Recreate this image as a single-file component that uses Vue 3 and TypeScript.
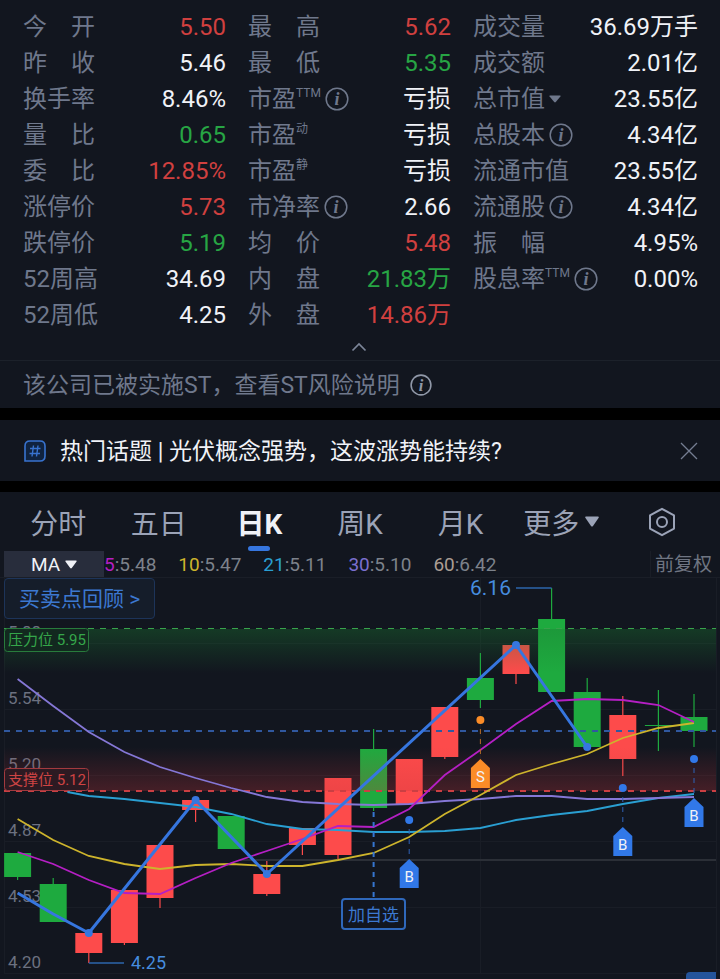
<script setup lang="ts">
type Tone = 'plain' | 'up' | 'down'

interface Stat {
  label: string
  value: string
  tone?: Tone
  sup?: string
  info?: boolean
  menu?: boolean
}

interface Candle {
  up: boolean
  high: number
  top: number
  bottom: number
  low: number
}

interface Marker {
  slot: number
  dot: number
  tip: number
  kind: 'B' | 'S'
}

const columns: Stat[][] = [
  [
    { label: '今　开', value: '5.50', tone: 'up' },
    { label: '昨　收', value: '5.46' },
    { label: '换手率', value: '8.46%' },
    { label: '量　比', value: '0.65', tone: 'down' },
    { label: '委　比', value: '12.85%', tone: 'up' },
    { label: '涨停价', value: '5.73', tone: 'up' },
    { label: '跌停价', value: '5.19', tone: 'down' },
    { label: '52周高', value: '34.69' },
    { label: '52周低', value: '4.25' },
  ],
  [
    { label: '最　高', value: '5.62', tone: 'up' },
    { label: '最　低', value: '5.35', tone: 'down' },
    { label: '市盈', sup: 'TTM', info: true, value: '亏损' },
    { label: '市盈', sup: '动', value: '亏损' },
    { label: '市盈', sup: '静', value: '亏损' },
    { label: '市净率', info: true, value: '2.66' },
    { label: '均　价', value: '5.48', tone: 'up' },
    { label: '内　盘', value: '21.83万', tone: 'down' },
    { label: '外　盘', value: '14.86万', tone: 'up' },
  ],
  [
    { label: '成交量', value: '36.69万手' },
    { label: '成交额', value: '2.01亿' },
    { label: '总市值', menu: true, value: '23.55亿' },
    { label: '总股本', info: true, value: '4.34亿' },
    { label: '流通市值', value: '23.55亿' },
    { label: '流通股', info: true, value: '4.34亿' },
    { label: '振　幅', value: '4.95%' },
    { label: '股息率', sup: 'TTM', info: true, value: '0.00%' },
  ],
]

const tabs = ['分时', '五日', '日K', '周K', '月K']
const activeTab = '日K'

const averages = [
  { period: '5', value: '5.48', color: '#b51fc4' },
  { period: '10', value: '5.47', color: '#cdb42c' },
  { period: '21', value: '5.11', color: '#2a9fd2' },
  { period: '30', value: '5.10', color: '#7b6fcf' },
  { period: '60', value: '6.42', color: '#ab9d93' },
]

/* Plot geometry: one slot per trading day, vertical values in plot units. */
const slotX = (slot: number): number => 17.6 + slot * 35.6
const bodyWidth = 27

const candles: Candle[] = [
  { up: false, high: 275, top: 275, bottom: 299, low: 302 },
  { up: false, high: 300, top: 306, bottom: 344, low: 344 },
  { up: true, high: 355, top: 355, bottom: 375, low: 385 },
  { up: true, high: 312, top: 312, bottom: 365, low: 367 },
  { up: true, high: 267, top: 267, bottom: 320, low: 330 },
  { up: true, high: 220, top: 222, bottom: 232, low: 244 },
  { up: false, high: 238, top: 238, bottom: 271, low: 271 },
  { up: true, high: 283, top: 296, bottom: 316, low: 318 },
  { up: true, high: 250, top: 250, bottom: 267, low: 277 },
  { up: true, high: 200, top: 200, bottom: 277, low: 281 },
  { up: false, high: 151, top: 171, bottom: 230, low: 233 },
  { up: true, high: 181, top: 181, bottom: 226, low: 226 },
  { up: true, high: 129, top: 129, bottom: 179, low: 181 },
  { up: false, high: 75, top: 100, bottom: 122, low: 130 },
  { up: true, high: 67, top: 67, bottom: 96, low: 106 },
  { up: false, high: 10, top: 41, bottom: 114, low: 114 },
  { up: false, high: 100, top: 114, bottom: 169, low: 169 },
  { up: true, high: 118, top: 137, bottom: 181, low: 198 },
  { up: false, high: 112, top: 147, bottom: 148, low: 173 },
  { up: false, high: 116, top: 139, bottom: 153, low: 169 },
]

const series = [
  {
    color: '#2a9fd2',
    start: 1.4,
    values: [214, 218, 221, 225, 229, 236, 246, 251, 252, 254, 254, 253, 250, 242, 237, 233, 226, 220, 216],
  },
  {
    color: '#8577d6',
    start: 0,
    values: [101, 128, 154, 174, 189, 200, 210, 219, 224, 226, 227, 226, 223, 221, 218, 218, 221, 221, 220, 219],
  },
  {
    color: '#cdb42c',
    start: 0,
    values: [241, 262, 278, 286, 291, 287, 286, 288, 288, 282, 275, 259, 236, 217, 197, 186, 176, 160, 150, 145],
  },
  {
    color: '#b51fc4',
    start: 0,
    values: [274, 286, 302, 315, 316, 300, 285, 273, 261, 248, 249, 231, 197, 172, 146, 123, 121, 122, 127, 144],
  },
].map((s) => ({
  color: s.color,
  points: s.values.map((v, i) => `${slotX(i === 0 ? s.start : Math.floor(s.start) + i)},${v}`).join(' '),
}))

const trades: [number, number][] = [
  [0, 315],
  [1, 336],
  [2, 355],
  [5, 222],
  [7, 296],
  [14, 67],
  [16, 169],
]
const tradeLine = trades.map(([slot, y]) => `${slotX(slot)},${y}`).join(' ')
const tradeDots = trades.slice(2)

const markers: Marker[] = [
  { slot: 11, dot: 242, tip: 281, kind: 'B' },
  { slot: 13, dot: 142, tip: 181, kind: 'S' },
  { slot: 17, dot: 210, tip: 249, kind: 'B' },
  { slot: 19, dot: 181, tip: 220, kind: 'B' },
]

const axis = [
  { text: '5.88', y: 65 },
  { text: '5.54', y: 131 },
  { text: '5.20', y: 197 },
  { text: '4.87', y: 263 },
  { text: '4.53', y: 329 },
  { text: '4.20', y: 395 },
]
</script>

<template>
  <main class="page">
    <section class="stats">
      <dl v-for="(column, c) in columns" :key="c" class="column">
        <div v-for="(stat, r) in column" :key="r" class="stat">
          <dt>
            <span>{{ stat.label }}</span>
            <span v-if="stat.sup" class="sup">{{ stat.sup }}</span>
            <button v-if="stat.info" class="icon-button info" :aria-label="stat.label">
              <svg width="24" height="24" viewBox="0 0 24 24">
                <circle cx="12" cy="12" r="10.8" fill="none" stroke="currentColor" stroke-width="1.5" />
                <text x="12" y="18" text-anchor="middle" class="info-letter">i</text>
              </svg>
            </button>
            <button v-if="stat.menu" class="icon-button menu" :aria-label="stat.label">
              <svg width="12" height="8" viewBox="0 0 12 8">
                <path d="M1 0.5H11Q12 0.7 11.4 1.6L6.8 7Q6 7.8 5.2 7L0.6 1.6Q0 0.7 1 0.5Z" fill="currentColor" />
              </svg>
            </button>
          </dt>
          <dd :class="stat.tone">{{ stat.value }}</dd>
        </div>
      </dl>
    </section>
    <button class="icon-button collapse" aria-label="收起">
      <svg width="16" height="10" viewBox="0 0 16 10">
        <path d="M1.5 8.5L8 2L14.5 8.5" fill="none" stroke="currentColor" stroke-width="1.7" />
      </svg>
    </button>

    <a href="#" class="notice">
      <span>该公司已被实施ST，查看ST风险说明</span>
      <svg width="22" height="22" viewBox="0 0 24 24">
        <circle cx="12" cy="12" r="10.8" fill="none" stroke="currentColor" stroke-width="1.7" />
        <text x="12" y="18" text-anchor="middle" class="info-letter">i</text>
      </svg>
    </a>

    <section class="topic">
      <svg width="22" height="22" viewBox="0 0 22 22" fill="none" stroke="#3873cf">
        <path d="M1 21V6Q1 1 6 1H16Q21 1 21 6V16Q21 21 16 21Z" fill="#10233f" stroke-width="1.6" />
        <path d="M6 8.5H16.5M5.5 13.5H16M9.5 5.5L8 16.5M14 5.5L12.5 16.5" stroke-width="1.4" />
      </svg>
      <a href="#" class="topic-link">热门话题 | 光伏概念强势，这波涨势能持续?</a>
      <button class="icon-button close" aria-label="关闭">
        <svg width="18" height="18" viewBox="0 0 18 18">
          <path d="M1 1L17 17M17 1L1 17" stroke="currentColor" stroke-width="1.3" />
        </svg>
      </button>
    </section>

    <section class="quote">
      <nav class="tabs">
        <button v-for="tab in tabs" :key="tab" class="tab" :class="{ active: tab === activeTab }">{{ tab }}</button>
        <button class="tab">
          更多
          <svg width="14" height="11" viewBox="0 0 14 11">
            <path d="M1 0.5H13Q14.4 0.8 13.5 2L8 10Q7 11 6 10L0.5 2Q-0.4 0.8 1 0.5Z" fill="currentColor" />
          </svg>
        </button>
        <button class="tab" aria-label="设置">
          <svg width="28" height="30" viewBox="0 0 28 30" fill="none" stroke="currentColor" stroke-width="2" stroke-linejoin="round">
            <path d="M14 1.8L26 8.4V21.6L14 28.2L2 21.6V8.4Z" />
            <circle cx="14" cy="15" r="5" />
          </svg>
        </button>
      </nav>

      <div class="averages">
        <button class="indicator">
          MA
          <svg width="12" height="9" viewBox="0 0 12 9">
            <path d="M1 0.5H11Q12.2 0.8 11.4 1.8L6.8 8Q6 8.9 5.2 8L0.6 1.8Q-0.2 0.8 1 0.5Z" fill="currentColor" />
          </svg>
        </button>
        <ul>
          <li v-for="ma in averages" :key="ma.period">
            <span :style="{ color: ma.color }">{{ ma.period }}</span>:{{ ma.value }}
          </li>
        </ul>
        <button class="adjust">前复权</button>
      </div>

      <div class="chart">
        <svg class="plot" viewBox="0 0 720 401" role="img" aria-label="日K">
          <defs>
            <linearGradient id="pressure" x1="0" y1="0" x2="0" y2="1">
              <stop offset="0" stop-color="#1a7a31" stop-opacity="0.36" />
              <stop offset="1" stop-color="#1a7a31" stop-opacity="0" />
            </linearGradient>
            <linearGradient id="support" x1="0" y1="0" x2="0" y2="1">
              <stop offset="0" stop-color="#c8343a" stop-opacity="0" />
              <stop offset="1" stop-color="#c8343a" stop-opacity="0.28" />
            </linearGradient>
          </defs>

          <g stroke="#191d26">
            <path d="M4 65.5H716M4 131.5H716M4 197.5H716M4 263.5H716M4 329.5H716M4 395.5H716" />
            <path d="M4.5 0V395M480.5 0V395M716.5 0V395" />
          </g>
          <path d="M240 282H716" stroke="#2b2f37" stroke-width="2" />
          <path d="M686 401V398Q686 394 690 394H716V401Z" fill="#24549b" />

          <g class="axis">
            <text v-for="tick in axis" :key="tick.text" x="8" :y="tick.y - 5">{{ tick.text }}</text>
          </g>

          <g v-for="(candle, i) in candles" :key="i" :class="candle.up ? 'rise' : 'fall'">
            <path :d="`M${slotX(i)} ${candle.high}V${candle.low}`" class="wick" />
            <rect :x="slotX(i) - bodyWidth / 2" :y="candle.top" :width="bodyWidth" :height="candle.bottom - candle.top" />
          </g>

          <rect x="4" y="51" width="712" height="44" fill="url(#pressure)" />
          <rect x="4" y="169" width="712" height="44" fill="url(#support)" />
          <path d="M4 50.5H716" stroke="#38a24b" stroke-dasharray="6 6" />
          <path d="M4 153H716" stroke="#30589f" stroke-width="2" stroke-dasharray="6 6" />
          <path d="M4 213H716" stroke="#cb3f43" stroke-width="2" stroke-dasharray="6 6" />

          <polyline v-for="line in series" :key="line.color" :points="line.points" :stroke="line.color" class="average" />
          <polyline :points="tradeLine" class="trade" />
          <circle v-for="[slot, y] in tradeDots" :key="slot" :cx="slotX(slot)" :cy="y" r="4" fill="#3676df" />

          <path :d="`M${slotX(10)} 234V320`" stroke="#3676cf" stroke-width="2" stroke-dasharray="5 5" />

          <g v-for="m in markers" :key="m.slot" :class="m.kind === 'B' ? 'buy' : 'sell'">
            <path :d="`M${slotX(m.slot)} ${m.dot + 9}V${m.tip}`" class="lead" />
            <circle :cx="slotX(m.slot)" :cy="m.dot" r="4" />
            <path :d="`M${slotX(m.slot)} ${m.tip}l9.5 9v20h-19v-20z`" />
            <text :x="slotX(m.slot)" :y="m.tip + 23" text-anchor="middle">{{ m.kind }}</text>
          </g>

          <path :d="`M516 10H${slotX(15)}`" stroke="#2d66ad" stroke-width="1.4" />
          <text x="470" y="17" class="extreme">6.16</text>
          <path :d="`M${slotX(2)} 385H124`" stroke="#2d66ad" stroke-width="1.4" />
          <text x="131" y="391" class="extreme low">4.25</text>

          <g class="level pressure">
            <rect x="4.5" y="50.5" width="84" height="23" rx="3" />
            <text x="8" y="67">压力位 5.95</text>
          </g>
          <g class="level support">
            <rect x="4.5" y="190.5" width="84" height="22" rx="3" />
            <text x="8" y="207">支撑位 5.12</text>
          </g>
        </svg>
        <button class="review">买卖点回顾 &gt;</button>
        <button class="watch">加自选</button>
      </div>
    </section>
  </main>
</template>

<style>
body {
  background: #000;
}
</style>

<style scoped>
.page {
  font-family: Roboto, 'Noto Sans CJK SC', sans-serif;
  color: #f0f2f7;
  background: #000;
  overflow: hidden;
}

button {
  padding: 0;
  border: 0;
  background: none;
  color: inherit;
  font: inherit;
  cursor: pointer;
}

a {
  color: inherit;
  text-decoration: none;
}

svg {
  display: block;
  flex: none;
}

.icon-button {
  display: flex;
  align-items: center;
  justify-content: center;
}

.stats {
  display: grid;
  grid-template-columns: 203fr 203fr 225fr;
  column-gap: 22px;
  padding: 9px 22px 0 23px;
  background: #12161f;
}

.column {
  margin: 0;
}

.stat {
  display: flex;
  justify-content: space-between;
  height: 36px;
  font-size: 24px;
  line-height: 36px;
  white-space: nowrap;
}

dt {
  display: flex;
  align-items: center;
  color: #6f788c;
}

dd {
  margin: 0;
}

.up {
  color: #d0403f;
}

.down {
  color: #27a544;
}

.sup {
  align-self: flex-start;
  font-size: 12px;
  line-height: 24px;
}

.info,
.menu {
  margin-left: 4px;
}

.info-letter {
  fill: currentColor;
  font: italic 700 18px 'Liberation Serif', serif;
}

.collapse {
  width: 100%;
  height: 27px;
  padding-right: 2px;
  box-sizing: border-box;
  background: #12161f;
  color: #7c8598;
}

.notice {
  display: flex;
  align-items: center;
  gap: 10px;
  height: 47px;
  padding: 0 23px;
  border-top: 1px solid #1c212a;
  background: #12161f;
  color: #6f788c;
  font-size: 23px;
}

.notice span {
  padding-bottom: 3px;
}

.notice svg {
  color: #9098a8;
}

.topic {
  display: flex;
  align-items: center;
  height: 61px;
  margin: 12px 0 11px;
  padding: 0 22px 0 24px;
  background: #12161f;
  font-size: 23px;
}

.topic-link {
  flex: 1;
  margin-left: 14px;
  padding-bottom: 3px;
}

.close {
  color: #747d91;
}

.quote {
  background: #12161f;
}

.tabs {
  display: grid;
  grid-template-columns: repeat(7, 1fr);
  height: 59px;
  padding: 0 8px;
  color: #9ba3b7;
  font-size: 28px;
}

.tab {
  position: relative;
  display: flex;
  align-items: center;
  justify-content: center;
  gap: 6px;
  height: 59px;
}

.tab.active {
  color: #f0f2f7;
  font-weight: 700;
}

.tab.active::after {
  content: '';
  position: absolute;
  left: 50%;
  bottom: 0;
  width: 22px;
  height: 5px;
  border-radius: 3px;
  background: #3676df;
  transform: translateX(-50%);
}

.averages {
  display: flex;
  align-items: stretch;
  height: 27px;
  padding: 0 4px;
  box-sizing: border-box;
  border-bottom: 1px solid #1a1e27;
  color: #7d828b;
  font-size: 19px;
  line-height: 27px;
}

.indicator {
  display: flex;
  align-items: center;
  justify-content: center;
  gap: 5px;
  width: 100px;
  background: #282d3c;
  color: #f0f2f7;
}

.averages ul {
  display: flex;
  flex: 1;
  gap: 22px;
  margin: 0;
  padding: 0;
  list-style: none;
}

.adjust {
  padding: 0 4px;
  border-left: 1px solid #1a1e27;
  color: #6f7582;
}

.chart {
  position: relative;
}

.plot {
  width: 100%;
  height: auto;
  overflow: visible;
}

.axis text {
  fill: #6c7180;
  font-size: 17px;
}

.rise {
  fill: #fd4b4b;
  stroke: #fd4b4b;
}

.fall {
  fill: #1eaa3f;
  stroke: #1eaa3f;
}

.rise rect,
.fall rect {
  stroke: none;
}

.wick {
  stroke-width: 1.2;
}

.average {
  fill: none;
  stroke-width: 1.8;
}

.trade {
  fill: none;
  stroke: #3676df;
  stroke-width: 3;
  stroke-linejoin: round;
}

.buy {
  fill: #3178e8;
}

.sell {
  fill: #fb8c27;
}

.buy text,
.sell text {
  fill: #f0f2f7;
  font-size: 15px;
}

.lead {
  stroke: #2f62b5;
  stroke-dasharray: 5 5;
}

.sell .lead {
  stroke: #b86b25;
}

.extreme {
  fill: #468cde;
  font-size: 21px;
}

.extreme.low {
  font-size: 18px;
}

.level text {
  font-size: 15px;
}

.level.pressure rect {
  fill: #12291f;
  stroke: #287b3c;
}

.level.pressure text {
  fill: #35a64a;
}

.level.support rect {
  fill: #2d1a22;
  stroke: #a33a3f;
}

.level.support text {
  fill: #cf4444;
}

.review {
  position: absolute;
  top: 0;
  left: 4px;
  height: 41px;
  padding: 0 14px 3px;
  border: 1px solid #1d3459;
  border-radius: 4px;
  background: #151d2a;
  color: #3c78d0;
  font-size: 21px;
}

.watch {
  position: absolute;
  top: 320px;
  left: 341px;
  height: 32px;
  padding: 0 5px 2px;
  border: 2px solid #2f68bb;
  border-radius: 4px;
  background: #12161f;
  color: #3c78d0;
  font-size: 17px;
}
</style>
